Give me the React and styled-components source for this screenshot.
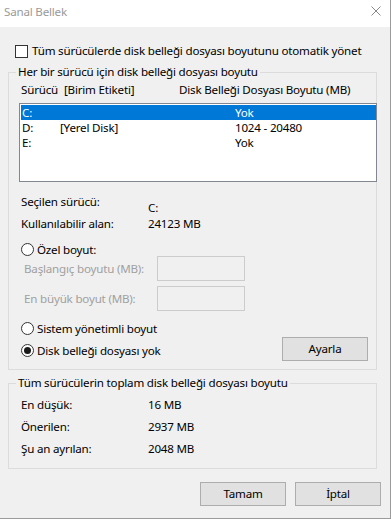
import styled, { createGlobalStyle } from "styled-components";

const GlobalStyle = createGlobalStyle`
  html, body {
    margin: 0;
    padding: 0;
    background: #f0f0f0;
  }
  * {
    box-sizing: border-box;
  }
`;

const Window = styled.div`
  width: 391px;
  height: 519px;
  background: #f0f0f0;
  border-right: 1px solid #9b9b9b;
  border-bottom: 1px solid #9b9b9b;
  font-family: "Noto Sans", "Liberation Sans", sans-serif;
  font-size: 11.6px;
  letter-spacing: -0.2px;
  color: #000;
  display: flex;
  flex-direction: column;
`;

const TitleBar = styled.div`
  height: 27px;
  background: #fff;
  display: flex;
  align-items: flex-start;
  justify-content: space-between;
  padding: 4px 9px 0 4px;
  flex-shrink: 0;
`;

const Title = styled.span`
  line-height: 16px;
  color: #9a9a9a;
`;

const Close = styled.svg`
  margin-top: 2px;
`;

const Body = styled.div`
  padding: 16px 0 0 8px;
  display: flex;
  flex-direction: column;
`;

const CheckRow = styled.label`
  display: flex;
  align-items: center;
  gap: 4px;
  height: 16px;
  margin-left: 7px;
  line-height: 16px;
  white-space: nowrap;
`;

const Box = styled.span`
  width: 13px;
  height: 13px;
  border: 1px solid #333;
  background: #fff;
  flex-shrink: 0;
`;

const Group = styled.fieldset`
  margin: ${(p) => p.$top}px 0 0 0;
  padding: 0;
  width: 369px;
  min-width: 0;
  border: 1px solid #dcdcdc;
`;

const Legend = styled.legend`
  margin-left: 7px;
  padding: 0 2px;
  line-height: 16px;
  white-space: nowrap;
`;

const GroupContent = styled.div`
  padding: 0 ${(p) => p.$right}px ${(p) => p.$bottom}px 10px;
  display: flex;
  flex-direction: column;
`;

const HeaderRow = styled.div`
  display: flex;
  margin-top: 2px;
  padding-left: 2px;
  line-height: 16px;
  height: 16px;
`;

const HeaderCell = styled.span`
  width: ${(p) => p.$w}px;
  white-space: nowrap;
  flex-shrink: 0;
`;

const ListBox = styled.div`
  margin: 5px -9px 0 0;
  height: 79px;
  border: 1px solid #828790;
  background: #fff;
  padding: 1px 0 1px 1px;
`;

const ListRow = styled.div`
  display: grid;
  grid-template-columns: 38px 175px 1fr;
  height: 15px;
  line-height: 15px;
  padding-left: 1px;
  background: ${(p) => (p.$selected ? "#0078d7" : "transparent")};
  color: ${(p) => (p.$selected ? "#fff" : "#000")};
  white-space: nowrap;
`;

const InfoGrid = styled.div`
  display: grid;
  grid-template-columns: 127px 1fr;
  margin-top: ${(p) => p.$top}px;
  padding-left: 2px;
  row-gap: ${(p) => p.$gap}px;
  line-height: 16px;
`;

const InfoValue = styled.span`
  padding-top: ${(p) => p.$offset || 0}px;
  white-space: nowrap;
`;

const RadioRow = styled.label`
  display: flex;
  align-items: center;
  gap: 3px;
  height: 13px;
  line-height: 13px;
  margin-top: ${(p) => p.$top}px;
  padding-left: 2px;
  white-space: nowrap;
`;

const Radio = styled.span`
  width: 13px;
  height: 13px;
  border-radius: 50%;
  border: 1px solid #333;
  background: #fff;
  flex-shrink: 0;
  display: flex;
  align-items: center;
  justify-content: center;
  &::after {
    content: "";
    width: 7px;
    height: 7px;
    border-radius: 50%;
    background: ${(p) => (p.$checked ? "#1a1a1a" : "transparent")};
  }
`;

const SizeRow = styled.div`
  display: flex;
  align-items: center;
  margin-top: ${(p) => p.$top}px;
  padding-left: 5px;
`;

const SizeLabel = styled.span`
  width: 133px;
  color: #a0a0a0;
  white-space: nowrap;
  line-height: 16px;
`;

const SizeInput = styled.div`
  width: 88px;
  height: 25px;
  border: 1px solid #cccccc;
  background: #f0f0f0;
`;

const BottomRow = styled.div`
  display: flex;
  justify-content: space-between;
  align-items: flex-end;
  margin-top: 11px;
`;

const RadioStack = styled.div`
  display: flex;
  flex-direction: column;
  padding-bottom: 4px;
`;

const Button = styled.button`
  width: 86px;
  height: 24px;
  border: 1px solid #adadad;
  background: #e1e1e1;
  font-family: inherit;
  font-size: inherit;
  letter-spacing: inherit;
  color: #000;
  padding: 0;
  line-height: 20px;
`;

const Footer = styled.div`
  display: flex;
  justify-content: flex-end;
  gap: 9px;
  margin-top: 13px;
  padding-right: 9px;
`;

const drives = [
  { drive: "C:", label: "", size: "Yok", selected: true },
  { drive: "D:", label: "[Yerel Disk]", size: "1024 - 20480" },
  { drive: "E:", label: "", size: "Yok" },
];

const totals = [
  ["En düşük:", "16 MB"],
  ["Önerilen:", "2937 MB"],
  ["Şu an ayrılan:", "2048 MB"],
];

export default function App() {
  return (
    <>
      <GlobalStyle />
      <Window>
        <TitleBar>
          <Title>Sanal Bellek</Title>
          <Close width="10" height="10" viewBox="0 0 10 10">
            <path d="M0.5 0.5 L9.5 9.5 M9.5 0.5 L0.5 9.5" stroke="#8a8a8a" strokeWidth="1" fill="none" />
          </Close>
        </TitleBar>
        <Body>
          <CheckRow>
            <Box />
            Tüm sürücülerde disk belleği dosyası boyutunu otomatik yönet
          </CheckRow>

          <Group $top={5}>
            <Legend>Her bir sürücü için disk belleği dosyası boyutu</Legend>
            <GroupContent $right={8} $bottom={8}>
              <HeaderRow>
                <HeaderCell $w={43}>Sürücü</HeaderCell>
                <HeaderCell $w={115}>[Birim Etiketi]</HeaderCell>
                <HeaderCell>Disk Belleği Dosyası Boyutu (MB)</HeaderCell>
              </HeaderRow>
              <ListBox>
                {drives.map((d) => (
                  <ListRow key={d.drive} $selected={d.selected}>
                    <span>{d.drive}</span>
                    <span>{d.label}</span>
                    <span>{d.size}</span>
                  </ListRow>
                ))}
              </ListBox>

              <InfoGrid $top={12} $gap={0}>
                <span>Seçilen sürücü:</span>
                <InfoValue $offset={6}>C:</InfoValue>
                <span>Kullanılabilir alan:</span>
                <InfoValue>24123 MB</InfoValue>
              </InfoGrid>

              <RadioRow $top={11}>
                <Radio />
                Özel boyut:
              </RadioRow>
              <SizeRow $top={0}>
                <SizeLabel>Başlangıç boyutu (MB):</SizeLabel>
                <SizeInput />
              </SizeRow>
              <SizeRow $top={5}>
                <SizeLabel>En büyük boyut (MB):</SizeLabel>
                <SizeInput />
              </SizeRow>

              <BottomRow>
                <RadioStack>
                  <RadioRow $top={0}>
                    <Radio />
                    Sistem yönetimli boyut
                  </RadioRow>
                  <RadioRow $top={9}>
                    <Radio $checked />
                    Disk belleği dosyası yok
                  </RadioRow>
                </RadioStack>
                <Button>Ayarla</Button>
              </BottomRow>
            </GroupContent>
          </Group>

          <Group $top={5}>
            <Legend>Tüm sürücülerin toplam disk belleği dosyası boyutu</Legend>
            <GroupContent $right={8} $bottom={11}>
              <InfoGrid $top={6} $gap={6}>
                {totals.map(([k, v]) => [
                  <span key={k}>{k}</span>,
                  <InfoValue key={v}>{v}</InfoValue>,
                ])}
              </InfoGrid>
            </GroupContent>
          </Group>

          <Footer>
            <Button>Tamam</Button>
            <Button>İptal</Button>
          </Footer>
        </Body>
      </Window>
    </>
  );
}
